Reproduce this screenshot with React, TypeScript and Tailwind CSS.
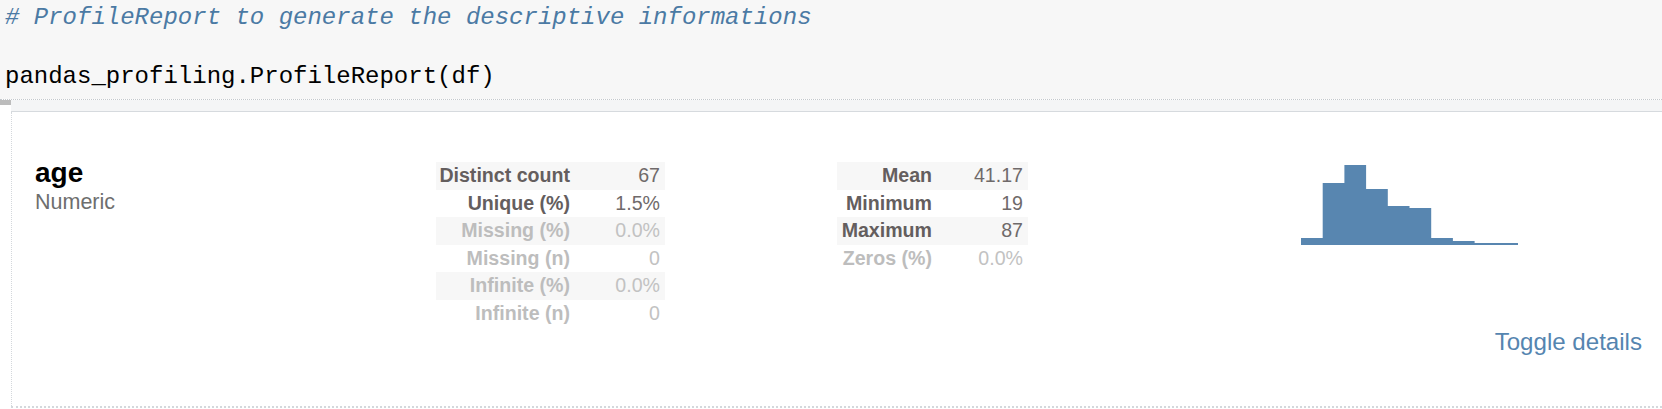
type StatRow = {
  label: string;
  value: string;
  shaded?: boolean;
  ignore?: boolean;
};

const TABLE_ONE: StatRow[] = [
  { label: "Distinct count", value: "67", shaded: true },
  { label: "Unique (%)", value: "1.5%" },
  { label: "Missing (%)", value: "0.0%", shaded: true, ignore: true },
  { label: "Missing (n)", value: "0", ignore: true },
  { label: "Infinite (%)", value: "0.0%", shaded: true, ignore: true },
  { label: "Infinite (n)", value: "0", ignore: true },
];

const TABLE_TWO: StatRow[] = [
  { label: "Mean", value: "41.17", shaded: true },
  { label: "Minimum", value: "19" },
  { label: "Maximum", value: "87", shaded: true },
  { label: "Zeros (%)", value: "0.0%", ignore: true },
];

// bar tops, baseline at 81
const BARS = [74, 19, 1, 25, 42, 44, 74, 77, 79, 79];

function StatTable({ rows, labelW, valueW }: { rows: StatRow[]; labelW: string; valueW: string }) {
  return (
    <div className="mt-[6px] flex flex-col">
      {rows.map((r) => (
        <div
          key={r.label}
          className={`flex h-[27.6px] items-center ${r.shaded ? "bg-[#f7f7f7]" : ""}`}
        >
          <span
            className={`${labelW} text-right font-bold ${r.ignore ? "text-[#bdbdbd]" : "text-[#645e5e]"}`}
          >
            {r.label}
          </span>
          <span
            className={`${valueW} pr-[5px] text-right ${r.ignore ? "text-[#c2c2c2]" : "text-[#6f6a6a]"}`}
          >
            {r.value}
          </span>
        </div>
      ))}
    </div>
  );
}

function Histogram() {
  const w = 21.7;
  // one outline so neighbouring bars don't show seams
  let d = "M0 81";
  BARS.forEach((top, i) => {
    d += ` L${(i * w).toFixed(1)} ${top} L${((i + 1) * w).toFixed(1)} ${top}`;
  });
  d += ` L${(BARS.length * w).toFixed(1)} 81 Z`;
  return (
    <svg width="218" height="82" viewBox="0 0 218 82" className="mt-[8px] block">
      <path d={d} fill="#5886b0" />
    </svg>
  );
}

export default function App() {
  return (
    <div className="h-[409px] w-[1662px] overflow-hidden bg-white">
      {/* code cell */}
      <div className="h-[99px] bg-[#f7f7f7] pl-[5px] font-['Liberation_Mono',monospace] text-[24px]">
        <div className="h-[36px] leading-[36px] italic text-[#4b7aa4]">
          # ProfileReport to generate the descriptive informations
        </div>
        <div className="mt-[23px] h-[36px] leading-[36px] text-black">
          pandas_profiling.ProfileReport(df)
        </div>
      </div>

      {/* output prompt band */}
      <div className="flex h-[13px] border-t border-dotted border-[#c4c8cc]">
        <div className="w-[11px]">
          <div className="h-[5px] bg-[#bcbcbc]" />
        </div>
        <div className="flex-1 border-b border-[#d6dade] bg-[#f4f5f6]" />
      </div>

      {/* report panel */}
      <div className="flex font-['Liberation_Sans',Arial,sans-serif]">
        <div className="w-[11px]" />
        <div className="flex h-[296px] flex-1 flex-col border-b-2 border-l border-dotted border-[#d4d8dc]">
          <div className="flex pt-[45px]">
            <div className="w-[424px] pl-[23px]">
              <div className="h-[32px] text-[28px] font-bold leading-[32px] text-black">age</div>
              <div className="h-[26px] text-[21.5px] leading-[26px] text-[#6e6e6e]">Numeric</div>
            </div>

            <div className="-mt-px w-[229px] text-[19.6px] leading-none">
              <StatTable rows={TABLE_ONE} labelW="w-[134px]" valueW="w-[95px]" />
            </div>

            <div className="-mt-px ml-[172px] w-[191px] text-[19.6px] leading-none">
              <StatTable rows={TABLE_TWO} labelW="w-[95px]" valueW="w-[96px]" />
            </div>

            <div className="-mt-px ml-[273px]">
              <Histogram />
            </div>
          </div>

          <div className="flex justify-end pr-[20px]">
            <span className="text-[24.1px] leading-[28px] text-[#5585b0]">Toggle details</span>
          </div>
        </div>
      </div>
    </div>
  );
}
